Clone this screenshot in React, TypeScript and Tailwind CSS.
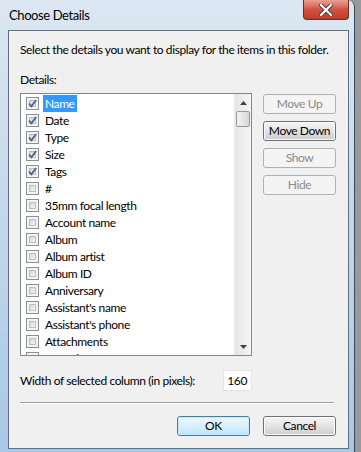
import React from 'react'

const FONT = { fontFamily: 'Lato, "Noto Sans", Arial, sans-serif' }

const items: { label: string; checked: boolean }[] = [
  { label: 'Name', checked: true },
  { label: 'Date', checked: true },
  { label: 'Type', checked: true },
  { label: 'Size', checked: true },
  { label: 'Tags', checked: true },
  { label: '#', checked: false },
  { label: '35mm focal length', checked: false },
  { label: 'Account name', checked: false },
  { label: 'Album', checked: false },
  { label: 'Album artist', checked: false },
  { label: 'Album ID', checked: false },
  { label: 'Anniversary', checked: false },
  { label: "Assistant's name", checked: false },
  { label: "Assistant's phone", checked: false },
  { label: 'Attachments', checked: false },
  { label: 'Attendees', checked: false },
]

function CheckBox({ checked }: { checked: boolean }) {
  return (
    <div className="relative w-[13px] h-[13px] shrink-0 border border-[#8e8f8f] bg-[#f4f4f4] p-[2px]">
      <div className="w-full h-full border border-[#bdbdbd] bg-gradient-to-br from-[#d6d6d6] to-[#f6f6f6]" />
      {checked && (
        <svg viewBox="0 0 11 11" className="absolute left-0 top-0 w-[11px] h-[11px]">
          <path d="M2 5.5 L4.4 8.3 L9.2 2" fill="none" stroke="#4a5f97" strokeWidth="1.8" />
        </svg>
      )}
    </div>
  )
}

function Button({
  label,
  disabled = false,
  primary = false,
}: {
  label: string
  disabled?: boolean
  primary?: boolean
}) {
  if (disabled) {
    return (
      <div className="flex items-center justify-center h-[20px] w-[73px] rounded-[3px] border border-[#adb2b5] bg-[#f4f4f4] text-[#8a8a8a]">
        {label}
      </div>
    )
  }
  if (primary) {
    return (
      <div className="h-[20px] w-[73px] rounded-[3px] border border-[#3c7fb1]">
        <div className="flex items-center justify-center h-full rounded-[2px] border border-[#cbe7f7] bg-gradient-to-b from-[#eaf6fd] via-[#d9f0fc] to-[#bee6fd] text-black">
          {label}
        </div>
      </div>
    )
  }
  return (
    <div className="h-[20px] w-[73px] rounded-[3px] border border-[#707070]">
      <div className="flex items-center justify-center h-full rounded-[2px] border border-[#fbfbfb] bg-gradient-to-b from-[#f2f2f2] via-[#e4e4e4] to-[#cfcfcf] text-black">
        {label}
      </div>
    </div>
  )
}

function Scrollbar() {
  return (
    <div className="flex flex-col w-[17px] shrink-0 bg-gradient-to-r from-[#e6e6e6] to-[#f4f4f4] border-l border-[#e8e8e8]">
      <div className="flex items-center justify-center h-[17px]">
        <svg width="7" height="4" viewBox="0 0 7 4">
          <path d="M0 4 L3.5 0 L7 4 Z" fill="#404040" />
        </svg>
      </div>
      <div className="mx-[1px] h-[16px] rounded-[2px] border border-[#989898] bg-gradient-to-r from-[#f3f3f3] via-[#e6e6e6] to-[#d6d6d6]" />
      <div className="flex-1" />
      <div className="flex items-center justify-center h-[17px]">
        <svg width="7" height="4" viewBox="0 0 7 4">
          <path d="M0 0 L7 0 L3.5 4 Z" fill="#404040" />
        </svg>
      </div>
    </div>
  )
}

export default function App() {
  return (
    <div
      className="flex w-[361px] h-[452px] overflow-hidden bg-gradient-to-r from-[#5a5a5a] to-[#9a9a9a] tracking-[-0.4px]"
      style={FONT}
    >
      <div className="relative flex flex-col w-[355px] h-[452px] rounded-tr-[7px] border-r border-[#3a4a5a] bg-gradient-to-b from-[#dce7f2] via-[#c3d7eb] to-[#a9c7e6] pl-[8px] pr-[5px] pb-[3px]">
        {/* title bar */}
        <div className="flex items-start justify-between h-[30px]">
          <div className="pl-[1px] pt-[7px] text-[13px] leading-[16px] text-black">Choose Details</div>
          <div className="flex items-center justify-center w-[46px] h-[20px] rounded-b-[4px] border border-t-0 border-[#6d2a22] bg-gradient-to-b from-[#e8a195] via-[#d0533f] to-[#c13b26]">
            <svg width="14" height="12" viewBox="0 0 14 12">
              <path d="M2 1 L12 11 M12 1 L2 11" stroke="#3a3a3a" strokeWidth="4" strokeLinecap="square" />
              <path d="M2 1 L12 11 M12 1 L2 11" stroke="#ffffff" strokeWidth="2.2" strokeLinecap="square" />
            </svg>
          </div>
        </div>

        {/* client area */}
        <div className="flex flex-col flex-1 border border-[#5f6f80] bg-[#f0f0f0] pl-[11px] pr-[12px] text-[12px] text-black">
          <div className="mt-[11px] leading-[16px] whitespace-nowrap">
            Select the details you want to display for the items in this folder.
          </div>
          <div className="mt-[14px] leading-[16px]">Details:</div>

          <div className="flex mt-[5px] gap-[11px]">
            {/* list */}
            <div className="flex w-[233px] h-[263px] border border-[#828790] bg-white overflow-hidden">
              <div className="flex-1 pt-[1px] overflow-hidden">
                {items.map((item, i) => (
                  <div key={item.label} className="flex items-center h-[17px] pl-[5px]">
                    <CheckBox checked={item.checked} />
                    <span
                      className={
                        i === 0
                          ? 'ml-[4px] px-[2px] leading-[17px] bg-[#3399ff] text-white'
                          : 'ml-[4px] px-[2px] leading-[17px] whitespace-nowrap'
                      }
                    >
                      {item.label}
                    </span>
                  </div>
                ))}
              </div>
              <Scrollbar />
            </div>

            {/* side buttons */}
            <div className="flex flex-col gap-[7px] pt-[1px]">
              <Button label="Move Up" disabled />
              <Button label="Move Down" />
              <Button label="Show" disabled />
              <Button label="Hide" disabled />
            </div>
          </div>

          <div className="flex items-center mt-[14px]">
            <span className="leading-[16px] whitespace-nowrap">Width of selected column (in pixels):</span>
            <div className="ml-auto mr-[84px] w-[29px] h-[21px] flex items-center justify-end pr-[4px] bg-white border border-[#e3e3e3]">
              160
            </div>
          </div>

          <div className="mt-[11px] mr-[2px] h-[2px] border-t border-[#a0a0a0] border-b border-b-white" />

          <div className="flex justify-end gap-[13px] mt-[12px]">
            <Button label="OK" primary />
            <Button label="Cancel" />
          </div>
        </div>
      </div>
    </div>
  )
}
